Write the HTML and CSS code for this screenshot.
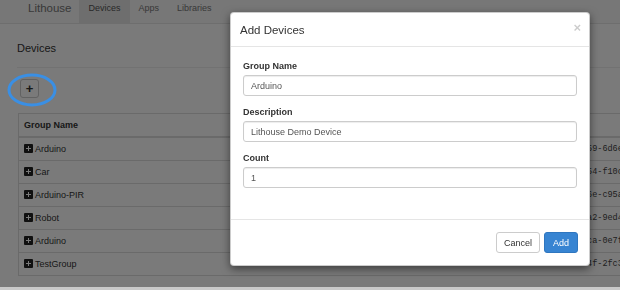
FILE: index.html
```html
<!DOCTYPE html>
<html lang="en">
<head>
  <meta charset="UTF-8">
  <title>Devices - Lithouse</title>
  <link rel="stylesheet" href="styles.css">
</head>
<body>

  <!-- Top navigation -->
  <div class="navbar">
    <span class="brand">Lithouse</span>
    <ul class="nav">
      <li class="active"><a href="#">Devices</a></li>
      <li><a href="#">Apps</a></li>
      <li><a href="#">Libraries</a></li>
    </ul>
  </div>

  <!-- Device groups -->
  <div class="page">
    <h3 class="page-header">Devices</h3>
    <button class="btn btn-default add-btn">+</button>

    <table class="devices">
      <thead>
        <tr><th class="col-name">Group Name</th><th>Device ID</th></tr>
      </thead>
      <tbody>
        <tr><td><span class="expand"></span>Arduino</td><td class="uuid">d2f41a07-8c3e-4b1a-9c59-6d6e2f0a8b41</td></tr>
        <tr><td><span class="expand"></span>Car</td><td class="uuid">7a1e93c2-5b8d-4f26-b154-f10c7d3e9a62</td></tr>
        <tr><td><span class="expand"></span>Arduino-PIR</td><td class="uuid">c83b0f5d-2e71-4a9c-8d6e-c95a1b7f40e3</td></tr>
        <tr><td><span class="expand"></span>Robot</td><td class="uuid">1f6d2c84-9a3b-4e57-a0a2-9ed4c6b18f70</td></tr>
        <tr><td><span class="expand"></span>Arduino</td><td class="uuid">5e9b7a13-c40f-4d82-b3ca-0e7f2a9d6c15</td></tr>
        <tr><td><span class="expand"></span>TestGroup</td><td class="uuid">9b3c5e28-7d1a-4c60-8e4f-2fc3b19a7d56</td></tr>
      </tbody>
    </table>
  </div>

  <!-- Modal backdrop -->
  <div class="backdrop"></div>

  <!-- Highlight around the add button -->
  <svg class="ring" width="52" height="36" viewBox="0 0 52 36">
    <ellipse cx="25" cy="17" rx="23" ry="15" fill="none" stroke="#3a8fe4" stroke-width="3"/>
  </svg>

  <!-- Add Devices dialog -->
  <div class="modal">
    <div class="modal-header">
      <h4 class="modal-title">Add Devices</h4>
      <span class="close">&times;</span>
    </div>
    <div class="modal-body">
      <div class="form-group">
        <label>Group Name</label>
        <input type="text" class="form-control" value="Arduino">
      </div>
      <div class="form-group">
        <label>Description</label>
        <input type="text" class="form-control" value="Lithouse Demo Device">
      </div>
      <div class="form-group last">
        <label>Count</label>
        <input type="text" class="form-control" value="1">
      </div>
    </div>
    <div class="modal-footer">
      <button class="btn btn-default">Cancel</button>
      <button class="btn btn-primary">Add</button>
    </div>
  </div>

  <!-- Window edge at the bottom -->
  <div class="window-edge"></div>

</body>
</html>
```

FILE: styles.css
```css
/* Global */
body {
  font-family: 'Liberation Sans', Arial, sans-serif;
  font-size: 9px;
  color: #333;
  background-color: #fff;
  margin: 0;
  padding: 0;
  height: 290px;
  overflow: hidden;
}

/* Navbar */
.navbar {
  display: flex;
  align-items: flex-start;
  height: 23px;
  padding-left: 28px;
  background-color: #f8f8f8;
  border-bottom: 1px solid #e7e7e7;
}

.brand {
  font-size: 11.5px;
  line-height: 16px;
  color: #777;
  margin-right: 8px;
}

.nav {
  display: flex;
  list-style: none;
  margin: 0;
  padding: 0;
}

.nav a {
  display: block;
  height: 23px;
  padding: 0 9px;
  line-height: 16px;
  color: #777;
  text-decoration: none;
}

.nav .active a {
  background-color: #e7e7e7;
  color: #555;
}

/* Page */
.page {
  padding: 17px 0 0 17px;
}

.page-header {
  margin: 0;
  padding-bottom: 12px;
  font-size: 11px;
  line-height: 14px;
  font-weight: normal;
  border-bottom: 1px solid #eee;
}

.btn {
  font-family: 'Liberation Sans', Arial, sans-serif;
  font-size: 9px;
  height: 21px;
  padding: 0 7px;
  border-radius: 3px;
  border: 1px solid transparent;
  cursor: pointer;
}

.btn-default {
  background-color: #fff;
  border-color: #ccc;
  color: #333;
}

.btn-primary {
  background-color: #3784d2;
  border-color: #2f76bf;
  color: #fff;
  padding: 0 8px;
}

.add-btn {
  display: block;
  margin: 11px 0 0 3px;
  width: 19px;
  height: 19px;
  padding: 0;
  font-size: 13px;
  font-weight: bold;
  line-height: 15px;
}

/* Device table */
.devices {
  margin-top: 15px;
  margin-left: 1px;
  width: 720px;
  border-collapse: collapse;
  border-left: 1px solid #ddd;
  border-bottom: 1px solid #ddd;
}

.devices th,
.devices td {
  padding: 5px 5px;
  line-height: 12px;
  text-align: left;
  white-space: nowrap;
}

.devices th {
  border-top: 1px solid #ddd;
  border-bottom: 2px solid #ddd;
}

.devices td {
  border-top: 1px solid #ddd;
}

.devices tbody tr:first-child td {
  border-top: 0;
}

.col-name {
  width: 446px;
}

.uuid {
  font-family: 'Liberation Mono', 'Courier New', monospace;
  font-size: 8.5px;
  color: #444;
}

.expand {
  display: inline-block;
  position: relative;
  width: 9px;
  height: 9px;
  margin-right: 2px;
  vertical-align: -1px;
  background-color: #222;
  border-radius: 1px;
}

.expand::before,
.expand::after {
  content: "";
  position: absolute;
  background-color: #fff;
}

.expand::before {
  left: 2px;
  top: 4px;
  width: 5px;
  height: 1px;
}

.expand::after {
  left: 4px;
  top: 2px;
  width: 1px;
  height: 5px;
}

/* Backdrop and highlight */
.backdrop {
  position: fixed;
  top: 0;
  left: 0;
  right: 0;
  bottom: 0;
  background-color: rgba(0, 0, 0, 0.52);
}

.ring {
  position: absolute;
  left: 7px;
  top: 73px;
}

.window-edge {
  position: fixed;
  left: 0;
  right: 0;
  bottom: 0;
  height: 3px;
  background-color: #c9c9c9;
}

/* Modal */
.modal {
  position: absolute;
  left: 230px;
  top: 12px;
  width: 358px;
  background-color: #fff;
  border: 1px solid rgba(0, 0, 0, 0.2);
  border-radius: 4px;
  box-shadow: 0 3px 9px rgba(0, 0, 0, 0.5);
}

.modal-header {
  display: flex;
  align-items: center;
  justify-content: space-between;
  height: 33px;
  padding: 0 8px 0 9px;
  border-bottom: 1px solid #e5e5e5;
}

.modal-title {
  margin: 0;
  font-size: 11.5px;
  font-weight: normal;
}

.close {
  font-size: 13px;
  font-weight: bold;
  color: #000;
  opacity: 0.2;
  margin-top: -4px;
}

.modal-body {
  padding: 12px 12px 31px 12px;
}

.form-group {
  margin-bottom: 9px;
}

.form-group.last {
  margin-bottom: 0;
}

.form-group label {
  display: block;
  font-weight: bold;
  line-height: 14px;
  margin-bottom: 2px;
}

.form-control {
  display: block;
  box-sizing: border-box;
  width: 100%;
  height: 21px;
  padding: 0 7px;
  font-family: 'Liberation Sans', Arial, sans-serif;
  font-size: 9px;
  color: #555;
  border: 1px solid #ccc;
  border-radius: 3px;
  box-shadow: inset 0 1px 1px rgba(0, 0, 0, 0.075);
}

.modal-footer {
  display: flex;
  justify-content: flex-end;
  gap: 4px;
  padding: 12px 11px 12px 0;
  border-top: 1px solid #e5e5e5;
}
```
